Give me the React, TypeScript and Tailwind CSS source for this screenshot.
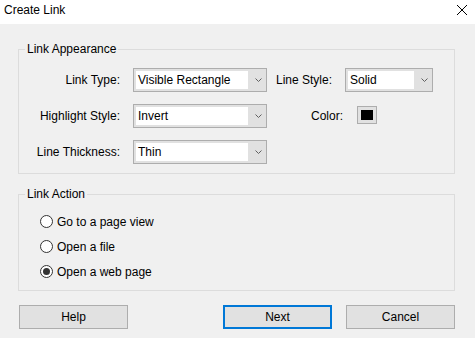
import { ReactNode } from 'react';

function Chevron() {
  return (
    <svg width="7" height="4" viewBox="0 0 7 4" className="block">
      <path d="M0.5 0.5 L3.5 3.5 L6.5 0.5" fill="none" stroke="#606060" strokeWidth="1" />
    </svg>
  );
}

function Combo({ value, width }: { value: string; width: string }) {
  return (
    <div className={`flex h-[24px] ${width} border border-[#adadad] bg-[#e1e1e1] py-[2px] pl-[2px]`}>
      <div className="flex flex-1 items-center bg-white pl-[2px]">{value}</div>
      <div className="flex w-[18px] items-center justify-end pr-[4px]">
        <Chevron />
      </div>
    </div>
  );
}

function Label({ children, width }: { children: ReactNode; width: string }) {
  return <div className={`flex ${width} justify-end whitespace-nowrap`}>{children}</div>;
}

function Radio({ label, checked }: { label: string; checked?: boolean }) {
  return (
    <div className="flex h-[25px] items-center gap-[4px] pl-[21px]">
      <span className="flex h-[13px] w-[13px] items-center justify-center rounded-full border border-[#333333] bg-white">
        {checked && <span className="h-[7px] w-[7px] rounded-full bg-[#333333]" />}
      </span>
      <span>{label}</span>
    </div>
  );
}

function Button({ children, primary }: { children: ReactNode; primary?: boolean }) {
  return (
    <button
      type="button"
      className={`flex h-[24px] w-[109px] items-center justify-center bg-[#e1e1e1] ${
        primary ? 'border-2 border-[#0078d7]' : 'border border-[#adadad]'
      }`}
    >
      {children}
    </button>
  );
}

export default function App() {
  return (
    <div className="h-[338px] w-[475px] overflow-hidden bg-[#f0f0f0] font-['Liberation_Sans',Arial,sans-serif] text-[12px] leading-[16px] text-black">
      <div className="flex h-[24px] items-start justify-between bg-white pl-[4px] pr-[8px] pt-[2px]">
        <span>Create Link</span>
        <svg width="10" height="10" viewBox="0 0 10 10" className="mt-[3px]">
          <path d="M0 0 L10 10 M10 0 L0 10" stroke="#000" strokeWidth="1" />
        </svg>
      </div>

      <div className="ml-[18px] w-[437px]">
        <fieldset className="mt-[17px] border border-[#dcdcdc] pb-[9px] pt-[11px]">
          <legend className="ml-[6px] px-[2px]">Link Appearance</legend>
          <div className="grid grid-cols-[101px_134px_auto] items-center gap-x-[13px] gap-y-[12px]">
            <Label width="w-[101px]">Link Type:</Label>
            <Combo value="Visible Rectangle" width="w-[134px]" />
            <div className="flex items-center">
              <Label width="w-[52px]">Line Style:</Label>
              <div className="ml-[13px]">
                <Combo value="Solid" width="w-[88px]" />
              </div>
            </div>

            <Label width="w-[101px]">Highlight Style:</Label>
            <Combo value="Invert" width="w-[134px]" />
            <div className="flex items-center">
              <Label width="w-[63px]">Color:</Label>
              <div className="ml-[14px] mb-[3px] h-[18px] w-[20px] border border-[#adadad] bg-[#e1e1e1] p-[3px]">
                <div className="h-full w-full bg-black" />
              </div>
            </div>

            <Label width="w-[101px]">Line Thickness:</Label>
            <Combo value="Thin" width="w-[134px]" />
            <div />
          </div>
        </fieldset>

        <fieldset className="mt-[12px] border border-[#dcdcdc] pb-[6px] pt-[7px]">
          <legend className="ml-[6px] px-[2px]">Link Action</legend>
          <Radio label="Go to a page view" />
          <Radio label="Open a file" />
          <Radio label="Open a web page" checked />
        </fieldset>

        <div className="mt-[14px] flex justify-between pl-[1px]">
          <Button>Help</Button>
          <div className="flex gap-[14px]">
            <Button primary>Next</Button>
            <Button>Cancel</Button>
          </div>
        </div>
      </div>
    </div>
  );
}
